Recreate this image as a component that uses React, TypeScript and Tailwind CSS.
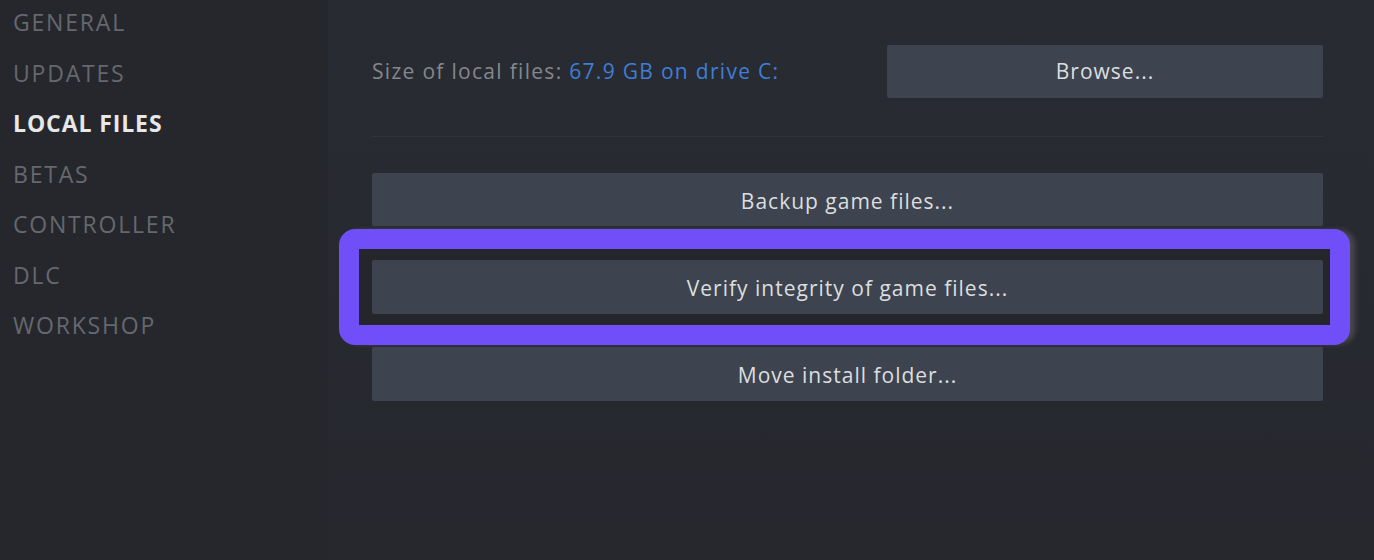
import React from "react";

const navItems = ["GENERAL", "UPDATES", "LOCAL FILES", "BETAS", "CONTROLLER", "DLC", "WORKSHOP"];

function SteamButton({ children, className = "" }: { children: React.ReactNode; className?: string }) {
  return (
    <div
      className={`flex h-[54px] items-center justify-center rounded-[2px] bg-[#3d4450] text-[21px] tracking-[1px] text-[#dcdedf] ${className}`}
    >
      {children}
    </div>
  );
}

export default function App() {
  return (
    <div
      className="flex h-[560px] w-[1374px] overflow-hidden bg-[#282a31]"
      style={{ fontFamily: '"Open Sans", "Noto Sans", sans-serif' }}
    >
      <aside className="w-[328px] shrink-0 bg-[#25272c] pl-[13px]">
        <ul className="-mt-[3px] flex flex-col">
          {navItems.map((item) => (
            <li
              key={item}
              className={`h-[50.5px] text-[23px] leading-[50.5px] ${
                item === "LOCAL FILES"
                  ? "font-bold tracking-[0.9px] text-[#e8e8e8]"
                  : "tracking-[1.8px] text-[#65686e]"
              }`}
            >
              {item}
            </li>
          ))}
        </ul>
      </aside>

      <main className="flex-1 bg-gradient-to-b from-[#292b32] to-[#26282e] pl-[44px] pt-[45px]">
        <div className="flex w-[951px] flex-col">
          <div className="flex items-center justify-between">
            <div className="text-[21px] tracking-[1.3px] text-[#84878d]">
              Size of local files: <span className="text-[#3f7ed6]">67.9 GB on drive C:</span>
            </div>
            <SteamButton className="w-[436px] !h-[53px] pt-[1px]">Browse...</SteamButton>
          </div>

          <div className="mt-[38px] h-px bg-[#32353c]" />

          <SteamButton className="mt-[36px] !h-[53px] pt-[4px]">Backup game files...</SteamButton>

          <div className="-ml-[33px] -mr-[27px] mt-[3px] rounded-[16px] border-[20px] border-[#704ef8] bg-[#24262b] pb-[11px] pl-[13px] pr-[7px] pt-[11px] shadow-[6px_0px_5px_-1px_rgba(110,110,110,0.45)]">
            <SteamButton className="pt-[4px]">Verify integrity of game files...</SteamButton>
          </div>

          <SteamButton className="mt-[2px] pt-[4px]">Move install folder...</SteamButton>
        </div>
      </main>
    </div>
  );
}
